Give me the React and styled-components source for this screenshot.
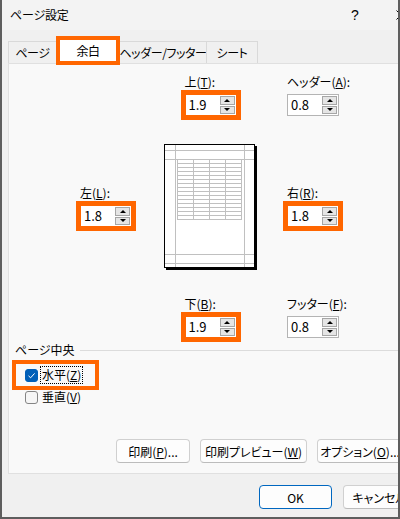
import React from 'react';
import styled, { createGlobalStyle } from 'styled-components';

const ORANGE = '#ff6600';

const GlobalStyle = createGlobalStyle`
  html, body {
    margin: 0;
    padding: 0;
    background: #f0f0f0;
  }
  body {
    font-family: "Noto Sans CJK JP", "Noto Sans", sans-serif;
    font-size: 12px;
    color: #000;
    font-feature-settings: "palt";
  }
`;

const Frame = styled.div`
  width: 400px;
  height: 519px;
  box-sizing: border-box;
  border: 2px solid #5e5e5e;
  border-top: none;
  overflow: hidden;
  background: #f0f0f0;
`;

const Dialog = styled.div`
  width: 422px;
  height: 100%;
  display: flex;
  flex-direction: column;
`;

const TitleBar = styled.div`
  height: 30px;
  display: flex;
  align-items: center;
  padding-left: 8px;
  background: #f3f3f3;
`;

const Title = styled.div`
  flex: 1;
  line-height: 16px;
  letter-spacing: -0.2px;
`;

const TitleButton = styled.div`
  width: 46px;
  height: 30px;
  display: flex;
  align-items: center;
  justify-content: center;
  font-size: 14px;
  font-family: "Liberation Sans", sans-serif;
`;

const Tabs = styled.div`
  display: flex;
  align-items: flex-end;
  height: 22px;
  margin-top: 11px;
  padding-left: 6px;
`;

const Tab = styled.div`
  position: relative;
  width: ${(p) => p.$w}px;
  height: 22px;
  box-sizing: border-box;
  margin-left: ${(p) => (p.$first ? 0 : -1)}px;
  border: 1px solid #d9d9d9;
  border-bottom: none;
  background: #f0f0f0;
  display: flex;
  align-items: center;
  justify-content: center;
  white-space: nowrap;
  letter-spacing: -0.4px;
`;

const ActiveTab = styled(Tab)`
  z-index: 2;
  height: 29px;
  margin-bottom: -2px;
  border: 4px solid ${ORANGE};
  background: #fff;
`;

const Panel = styled.div`
  margin-left: 6px;
  width: 410px;
  height: 411px;
  box-sizing: border-box;
  border: 1px solid #e0e0e0;
  background: #f9f9f9;
  display: flex;
  flex-direction: column;
`;

const MarginGrid = styled.div`
  display: grid;
  grid-template-columns: 71px 52px 32px 93px 30px 52px;
  padding-top: 10px;
`;

const Field = styled.div`
  display: flex;
  flex-direction: column;
  width: 52px;
  grid-column: ${(p) => p.$col};
  grid-row: ${(p) => p.$row};
  justify-self: ${(p) => (p.$center ? 'center' : 'start')};
  align-self: ${(p) => (p.$middle ? 'center' : 'start')};
`;

const Label = styled.div`
  line-height: 16px;
  margin-bottom: 4px;
  white-space: nowrap;
`;

const SpinBox = styled.div`
  display: flex;
  width: 52px;
  height: 22px;
  box-sizing: border-box;
  padding: 1px;
  gap: 2px;
  background: #fff;
  border: 1px solid ${(p) => (p.$hl ? ORANGE : '#b4b4b4')};
  outline: ${(p) => (p.$hl ? `4px solid ${ORANGE}` : 'none')};
`;

const SpinValue = styled.div`
  flex: 1;
  padding-left: 2px;
  line-height: 18px;
  font-size: 13px;
`;

const SpinButtons = styled.div`
  width: 15px;
  display: flex;
  flex-direction: column;
  gap: 1px;
`;

const SpinButton = styled.div`
  flex: 1;
  box-sizing: border-box;
  background: #e5e5e5;
  border: 1px solid #a6a6a6;
  display: flex;
  align-items: center;
  justify-content: center;
`;

const Arrow = styled.div`
  width: 0;
  height: 0;
  border-left: 3px solid transparent;
  border-right: 3px solid transparent;
  ${(p) => (p.$down ? 'border-top: 3px solid #000;' : 'border-bottom: 3px solid #000;')}
`;

const Preview = styled.div`
  grid-column: 4;
  grid-row: 2;
  margin: 28px 0 26px;
  height: 126px;
`;

const GroupHeader = styled.div`
  display: flex;
  align-items: center;
  margin-top: 4px;
  padding-left: 6px;
  line-height: 16px;
`;

const GroupLine = styled.div`
  flex: 1;
  margin-left: 5px;
  border-top: 1px solid #dcdcdc;
`;

const CheckList = styled.div`
  display: flex;
  flex-direction: column;
  align-items: flex-start;
  margin: 6px 0 0 7px;
`;

const CheckRow = styled.div`
  display: flex;
  align-items: center;
  height: 22px;
  padding: 0 12px 0 9px;
  gap: 2px;
  outline: ${(p) => (p.$hl ? `4px solid ${ORANGE}` : 'none')};
`;

const Box = styled.div`
  width: 13px;
  height: 13px;
  box-sizing: border-box;
  border-radius: 3px;
  display: flex;
  align-items: center;
  justify-content: center;
  background: ${(p) => (p.$checked ? '#005fb8' : '#f6f6f6')};
  border: 1px solid ${(p) => (p.$checked ? '#005fb8' : '#858585')};
`;

const CheckText = styled.span`
  line-height: 16px;
  padding: 0 1px;
  border: 1px dotted ${(p) => (p.$focus ? '#000' : 'transparent')};
`;

const ButtonRow = styled.div`
  display: flex;
  gap: 10px;
  margin-top: auto;
  margin-left: 107px;
  padding-bottom: 10px;
`;

const Button = styled.div`
  width: ${(p) => p.$w}px;
  height: 24px;
  flex-shrink: 0;
  box-sizing: border-box;
  border: 1px solid ${(p) => (p.$primary ? '#0067c0' : '#d0d0d0')};
  border-bottom-color: ${(p) => (p.$primary ? '#0067c0' : '#bcbcbc')};
  border-radius: 4px;
  background: #fdfdfd;
  display: flex;
  align-items: center;
  justify-content: center;
  white-space: nowrap;
`;

const BottomBar = styled.div`
  display: flex;
  justify-content: flex-end;
  gap: 11px;
  padding: 11px 8px 0;
`;

const Spinner = ({ value, hl }) => (
  <SpinBox $hl={hl}>
    <SpinValue>{value}</SpinValue>
    <SpinButtons>
      <SpinButton>
        <Arrow />
      </SpinButton>
      <SpinButton>
        <Arrow $down />
      </SpinButton>
    </SpinButtons>
  </SpinBox>
);

const PagePreview = () => {
  const rows = [];
  for (let y = 15; y <= 75; y += 4) rows.push(y);
  const cols = [13, 29, 45, 61, 77];
  return (
    <svg width="93" height="126" viewBox="0 0 93 126">
      <rect x="2" y="2" width="91" height="124" fill="#000" />
      <rect x="0.5" y="0.5" width="90" height="123" fill="#fff" stroke="#000" />
      <g stroke="#c0c0c0" strokeWidth="1">
        <line x1="11.5" y1="1" x2="11.5" y2="123" />
        <line x1="80.5" y1="1" x2="80.5" y2="123" />
        <line x1="1" y1="6.5" x2="90" y2="6.5" />
        <line x1="1" y1="15.5" x2="90" y2="15.5" />
        <line x1="1" y1="110.5" x2="90" y2="110.5" />
        <line x1="1" y1="119.5" x2="90" y2="119.5" />
        {rows.map((y) => (
          <line key={y} x1="13" y1={y + 0.5} x2="78" y2={y + 0.5} />
        ))}
        {cols.map((x) => (
          <line key={x} x1={x + 0.5} y1="15" x2={x + 0.5} y2="76" />
        ))}
      </g>
    </svg>
  );
};

const App = () => (
  <>
    <GlobalStyle />
    <Frame>
      <Dialog>
        <TitleBar>
          <Title>ページ設定</Title>
          <TitleButton>?</TitleButton>
          <TitleButton>
            <svg width="10" height="10" viewBox="0 0 10 10">
              <path d="M0.5 0.5 L9.5 9.5 M9.5 0.5 L0.5 9.5" stroke="#000" strokeWidth="1" />
            </svg>
          </TitleButton>
        </TitleBar>

        <Tabs>
          <Tab $first $w={49}>ページ</Tab>
          <ActiveTab $w={64}>余白</ActiveTab>
          <Tab $w={88}>ヘッダー/フッター</Tab>
          <Tab $w={52}>シート</Tab>
        </Tabs>

        <Panel>
          <MarginGrid>
            <Field $col={4} $row={1} $center>
              <Label>上(<u>T</u>):</Label>
              <Spinner value="1.9" hl />
            </Field>
            <Field $col={6} $row={1}>
              <Label>ヘッダー(<u>A</u>):</Label>
              <Spinner value="0.8" />
            </Field>

            <Field $col={2} $row={2} $middle>
              <Label>左(<u>L</u>):</Label>
              <Spinner value="1.8" hl />
            </Field>
            <Preview>
              <PagePreview />
            </Preview>
            <Field $col={6} $row={2} $middle>
              <Label>右(<u>R</u>):</Label>
              <Spinner value="1.8" hl />
            </Field>

            <Field $col={4} $row={3} $center>
              <Label>下(<u>B</u>):</Label>
              <Spinner value="1.9" hl />
            </Field>
            <Field $col={6} $row={3}>
              <Label>フッター(<u>F</u>):</Label>
              <Spinner value="0.8" />
            </Field>
          </MarginGrid>

          <GroupHeader>
            ページ中央
            <GroupLine />
          </GroupHeader>
          <CheckList>
            <CheckRow $hl>
              <Box $checked>
                <svg width="9" height="9" viewBox="0 0 9 9">
                  <path d="M1.5 4.8 L3.6 6.8 L7.6 2.4" fill="none" stroke="#fff" strokeWidth="1" />
                </svg>
              </Box>
              <CheckText $focus>水平(<u>Z</u>)</CheckText>
            </CheckRow>
            <CheckRow>
              <Box />
              <CheckText>垂直(<u>V</u>)</CheckText>
            </CheckRow>
          </CheckList>

          <ButtonRow>
            <Button $w={74}>印刷(<u>P</u>)...</Button>
            <Button $w={107}>印刷プレビュー(<u>W</u>)</Button>
            <Button $w={86}>オプション(<u>O</u>)...</Button>
          </ButtonRow>
        </Panel>

        <BottomBar>
          <Button $w={73} $primary>OK</Button>
          <Button $w={73}>キャンセル</Button>
        </BottomBar>
      </Dialog>
    </Frame>
  </>
);

export default App;
